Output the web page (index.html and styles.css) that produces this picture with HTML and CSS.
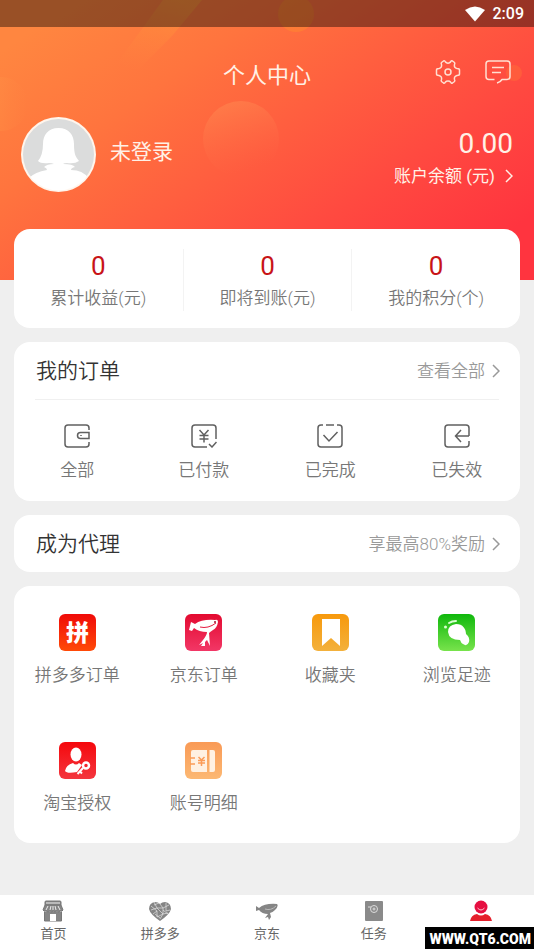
FILE: index.html
```html
<!DOCTYPE html>
<html lang="zh-CN">
<head>
<meta charset="utf-8">
<meta name="viewport" content="width=device-width, initial-scale=1">
<title>个人中心</title>
<link rel="stylesheet" href="styles.css">
</head>
<body>
<header class="hero">
  <svg class="hero-art" viewBox="0 0 534 280" preserveAspectRatio="xMidYMid slice" aria-hidden="true">
    <defs>
      <linearGradient id="ball" x1="0" y1="0" x2="0.3" y2="1"><stop offset="0" stop-color="#ff8a50" stop-opacity=".65"/><stop offset="1" stop-color="#ff6a48" stop-opacity="0"/></linearGradient>
      <linearGradient id="beam" x1="0.7" y1="0" x2="0.2" y2="1"><stop offset="0" stop-color="#ffa038" stop-opacity=".5"/><stop offset="1" stop-color="#ff8a40" stop-opacity="0"/></linearGradient>
      <linearGradient id="side" x1="0" y1="0" x2="1" y2="0"><stop offset="0" stop-color="#ff9a48" stop-opacity=".6"/><stop offset="1" stop-color="#ff8a44" stop-opacity="0"/></linearGradient>
    </defs>
    <path d="M163 0H202L172 36L138 70L112 70Z" fill="url(#beam)"/>
    <circle cx="241" cy="139" r="38" fill="url(#ball)"/>
    <circle cx="296" cy="14" r="18" fill="#ffa820" opacity=".25"/>
    <circle cx="1" cy="104" r="27" fill="url(#side)"/>
    <circle cx="514" cy="73" r="8" fill="#ff7038" opacity=".45"/>
  </svg>
  <div class="status">
    <svg width="20" height="16" viewBox="0 0 20 16" aria-hidden="true"><path d="M0 4Q10-3 20 4L10 15.500Z" fill="#fff"/></svg>
    <span>2:09</span>
  </div>
  <div class="title-row">
    <h1>个人中心</h1>
    <div class="tools">
      <button type="button" aria-label="设置">
        <svg width="26" height="26" viewBox="0 0 26 26"><path d="M8.500 2C9.500 1.500 10 2 10.500 3C11.500 4.500 14.500 4.500 15.500 3C16 2 16.500 1.500 17.500 2L19.500 3.500C20 4 20 4.500 19.500 5.500C19 7.500 20 9 22 9.500C24 9.500 24.500 10 24.500 11V15C24.500 16 24 16.500 22 16.500C20 17 19 18.500 19.500 20.500C20 21.500 20 22 19.500 22.500L17.500 24C16.500 24.500 16 24 15.500 23C14.500 21.500 11.500 21.500 10.500 23C10 24 9.500 24.500 8.500 24L6.500 22.500C6 22 6 21.500 6.500 20.500C7 18.500 6 17 4 16.500C2 16.500 1.500 16 1.500 15V11C1.500 10 2 9.500 4 9.500C6 9 7 7.500 6.500 5.500C6 4.500 6 4 6.500 3.500Z"/><circle cx="13" cy="13" r="3"/></svg>
      </button>
      <button type="button" aria-label="消息">
        <svg width="26" height="26" viewBox="0 0 26 26"><path d="M9.500 20.500H4Q1 20.500 1 17.500V5Q1 2 4 2H22Q25 2 25 5V17.500Q25 20.500 22 20.500H17Q15.500 23 12 24M7 8.500H19M7 13.500H16"/></svg>
      </button>
    </div>
  </div>
  <div class="profile">
    <svg class="avatar" viewBox="0 0 75 75" aria-hidden="true">
      <defs><clipPath id="face"><circle cx="37.500" cy="37.500" r="36"/></clipPath></defs>
      <circle cx="37.500" cy="37.500" r="37.500" fill="#fff5ec"/>
      <circle cx="37.500" cy="37.500" r="35.500" fill="#dbdcdc"/>
      <path clip-path="url(#face)" d="M37.500 11C48 11 53 18 53 27C53 38 55 40 58 44Q54 47 46 46Q43 46 42 47Q52 47 54 50Q50 51 50 53Q62 53 67 61L60 78H15L8 61Q14 55 26 53Q26 51 23 50Q26 47 33 47Q31 46 28 46Q20 47 17 44Q22 38 22 27C22 18 27 11 37.500 11Z" fill="#fff"/>
    </svg>
    <span class="name">未登录</span>
    <a class="balance" href="#balance">
      <strong>0.00</strong>
      <span>账户余额 (元)<svg class="chev" width="8" height="14" viewBox="0 0 8 14"><path d="M1 1L7 7L1 13"/></svg></span>
    </a>
  </div>
</header>

<main>
  <section class="card stats">
    <div><b>0</b><span>累计收益(元)</span></div>
    <div><b>0</b><span>即将到账(元)</span></div>
    <div><b>0</b><span>我的积分(个)</span></div>
  </section>

  <section class="card">
    <div class="head">
      <h2>我的订单</h2>
      <a href="#orders">查看全部<svg class="chev" width="8" height="14" viewBox="0 0 8 14"><path d="M1 1L7 7L1 13"/></svg></a>
    </div>
    <nav class="grid orders">
      <a href="#all"><svg width="26" height="24" viewBox="0 0 26 24"><path d="M25 6V4Q25 1 22 1H4Q1 1 1 4V20Q1 23 4 23H22Q25 23 25 20V18M25 8.500H16.500Q13.500 8.500 13.500 11.500Q13.500 14.500 16.500 14.500H25ZM17 11V12"/></svg>全部</a>
      <a href="#paid"><svg width="26" height="24" viewBox="0 0 26 24"><path d="M25 15V4Q25 1 22 1H4Q1 1 1 4V20Q1 23 4 23H16M18 20L21 23L25.500 18M8.500 6L13 11L17.500 6M8.500 11.500H17.500M8.500 15H17.500M13 11V18.500"/></svg>已付款</a>
      <a href="#done"><svg width="26" height="24" viewBox="0 0 26 24"><path d="M6 1H4Q1 1 1 4V20Q1 23 4 23H22Q25 23 25 20V4Q25 1 22 1H20M9 1H17M6.500 11L12 17L20.500 8"/></svg>已完成</a>
      <a href="#invalid"><svg width="26" height="24" viewBox="0 0 26 24"><path d="M25 12V4Q25 1 22 1H4Q1 1 1 4V20Q1 23 4 23H22Q25 23 25 20V17M25 12H11.500M17 6L11.500 12L17 18"/></svg>已失效</a>
    </nav>
  </section>

  <section class="card">
    <div class="head">
      <h2>成为代理</h2>
      <a href="#agent">享最高80%奖励<svg class="chev" width="8" height="14" viewBox="0 0 8 14"><path d="M1 1L7 7L1 13"/></svg></a>
    </div>
  </section>

  <nav class="card grid services">
    <a href="#pdd"><svg width="37" height="37" viewBox="0 0 37 37">
      <defs><linearGradient id="g1" x2="0" y2="1"><stop stop-color="#f00a08"/><stop offset="1" stop-color="#ff4a08"/></linearGradient></defs>
      <rect width="37" height="37" rx="6" fill="url(#g1)"/><text class="glyph" x="18.500" y="27" text-anchor="middle">拼</text></svg>拼多多订单</a>
    <a href="#jd"><svg width="37" height="37" viewBox="0 0 37 37">
      <defs><linearGradient id="g2" x2="0" y2="1"><stop stop-color="#e30a30"/><stop offset="1" stop-color="#f23766"/></linearGradient></defs>
      <rect width="37" height="37" rx="6" fill="url(#g2)"/><path d="M6 8L10 10Q17 5 30 6Q33 5 33 8Q32 14 28 16Q25 18 24 19L25 32L22 26L20 28L20 32L16 32L18 29L14 31L18 26Q22 21 22 18Q14 18 9 14L7 17L4 16Z" fill="#fff"/><path d="M15 13Q23 15 31 9" fill="none" stroke="#e51a40"/><circle cx="30" cy="8" r="1" fill="#a01030"/></svg>京东订单</a>
    <a href="#fav"><svg width="37" height="37" viewBox="0 0 37 37">
      <defs><linearGradient id="g3" x2="0" y2="1"><stop stop-color="#f7990c"/><stop offset="1" stop-color="#f3b13c"/></linearGradient></defs>
      <rect width="37" height="37" rx="6" fill="url(#g3)"/><path d="M10 5H28V32L19 24L10 32Z" fill="#fff"/></svg>收藏夹</a>
    <a href="#history"><svg width="37" height="37" viewBox="0 0 37 37">
      <defs><linearGradient id="g4" x2="0" y2="1"><stop stop-color="#0fb80c"/><stop offset="1" stop-color="#78e34c"/></linearGradient></defs>
      <rect width="37" height="37" rx="6" fill="url(#g4)"/><path d="M18 10C25 10 28 15 28 20Q32 23 31 28Q29 33 25 30Q23 29 22 26Q11 26 10 18Q10 11 18 10Z" fill="#fff"/><path d="M11 9Q14 7 18 7" fill="none" stroke="#d9ffd0" stroke-width="2" stroke-linecap="round"/><circle cx="7.500" cy="13" r="1.500" fill="#d9ffd0"/></svg>浏览足迹</a>
    <a href="#taobao"><svg width="37" height="37" viewBox="0 0 37 37">
      <defs><linearGradient id="g5" x2="0" y2="1"><stop stop-color="#f5080c"/><stop offset="1" stop-color="#f4363e"/></linearGradient></defs>
      <rect width="37" height="37" rx="6" fill="url(#g5)"/><ellipse cx="17" cy="12.500" rx="5.500" ry="7" fill="#fff"/><path d="M6 29Q7 23 14 21Q17 24 20 21L23 23L18 30Q8 32 6 29Z" fill="#fff"/><circle cx="27" cy="23.500" r="3" fill="none" stroke="#fff" stroke-width="2.500"/><path d="M24 26L18.500 32M21 29.500L23 31.500" stroke="#fff" stroke-width="2"/></svg>淘宝授权</a>
    <a href="#details"><svg width="37" height="37" viewBox="0 0 37 37">
      <defs><linearGradient id="g6" x2="0" y2="1"><stop stop-color="#f99a56"/><stop offset="1" stop-color="#fcb873"/></linearGradient></defs>
      <rect width="37" height="37" rx="6" fill="url(#g6)"/><path d="M8 8H22V30H8Q6 30 6 28V10Q6 8 8 8ZM24.500 8H28Q30 8 30 10V28Q30 30 28 30H24.500Z" fill="#fff1e2"/><path d="M5 16H10M5 22H10M13.500 15L16.500 18L19.500 15M13 18.500H20M13 21H20M16.500 18V24" fill="none" stroke="#fb9c58" stroke-width="1.500"/></svg>账号明细</a>
  </nav>
</main>

<nav class="tabs">
  <a href="#home"><svg width="22" height="22" viewBox="0 0 22 22"><path d="M3 2Q3 1 4 1H18Q19 1 19 2V5H3ZM3 5L1 10Q2 12 4 11Q6 13 8 11Q10 13 11 11Q13 13 15 11Q17 13 18 11Q20 12 21 10L19 5M2.500 12V21H19.500V12" fill="#858585" stroke="#777"/><path d="M4 3H18M6 6L4 10M9 6L8 10M13 6L14 10M16 6L18 10M11 6V10" stroke="#eee" fill="none"/><path d="M8 14H14V21H8Z" fill="#fff"/></svg>首页</a>
  <a href="#group"><svg width="22" height="22" viewBox="0 0 22 22"><path d="M11 21Q1 14 0 9Q0 3 6 2Q9 2 11 4Q13 2 16 2Q22 3 22 9Q21 14 11 21Z" fill="#858585"/><path d="M2 6L8 11L4 14M5 2L8 8L2 10M8 8L14 14L11 19M11 4L14 8L20 5M14 8L14 14L19 13M17 3V11L21 10M8 11V17L14 14M8 8H14M5 5L10 3M14 10L19 14M6 14L11 18" stroke="#e2e2e2" stroke-width=".7" fill="none"/></svg>拼多多</a>
  <a href="#jingdong"><svg width="22" height="22" viewBox="0 0 22 22"><path d="M0 6L3 8Q9 3 21 4Q23 6 19 10Q16 13 14 13L15 17L13 20L12 17L9 18L12 14Q6 14 3 10L0 11Z" fill="#858585"/><path d="M9 9Q15 11 20 6" stroke="#bbb" fill="none"/></svg>京东</a>
  <a href="#tasks"><svg width="22" height="22" viewBox="0 0 22 22"><rect x="2" y="1" width="18" height="20" rx="1" fill="#8a8a8a"/><circle cx="11" cy="9" r="3.500" fill="none" stroke="#ddd"/><path d="M5 7H8M9.500 9H12.500M11 7.500V10.500" stroke="#ddd"/></svg>任务</a>
  <a href="#me" aria-label="个人中心" aria-current="page"><svg width="22" height="22" viewBox="0 0 22 22"><circle cx="11" cy="7" r="6.500" fill="#e60f41"/><path d="M7.500 8Q11 12 14.500 8" fill="none" stroke="#ffc4cf"/><path d="M0 21Q1 15 7 14Q11 17 15 14Q21 15 22 21Z" fill="#e5202c"/></svg></a>
</nav>
<div class="mark">WWW.QT6.COM</div>
</body>
</html>
```
FILE: styles.css
```css
* { box-sizing: border-box; }
body {
  margin: 0;
  min-height: 100vh;
  display: flex;
  flex-direction: column;
  background: #efefef;
  color: #777;
  font-family: Roboto, "Noto Sans CJK SC", sans-serif;
  font-size: 17px;
  font-weight: 350;
  line-height: 24px;
}
a { color: inherit; text-decoration: none; }
h1, h2 { margin: 0; font-weight: 350; }
svg { display: block; flex: none; }

.hero {
  position: relative;
  height: 280px;
  color: #fff1e6;
  background: linear-gradient(145deg, #ff8640 8%, #ff743e 30%, #ff4a40 68%, #ff343f 90%);
}
.hero > * { position: relative; }
.hero .hero-art { position: absolute; inset: 0; width: 100%; height: 100%; }
.status {
  display: flex;
  align-items: center;
  justify-content: flex-end;
  gap: 8px;
  height: 27px;
  padding: 0 10px;
  background: rgba(0, 0, 0, .4);
  color: #fff;
  font-size: 16px;
  font-weight: 500;
}
.title-row {
  display: grid;
  grid-template-columns: 1fr auto 1fr;
  align-items: center;
  height: 90px;
  padding: 0 23px;
}
h1 { grid-column: 2; padding-top: 7px; font-size: 22px; line-height: 32px; font-weight: 400; }
.tools { display: flex; justify-content: flex-end; gap: 24px; }
.tools button { padding: 0; border: 0; background: none; cursor: pointer; }
.tools svg { fill: none; stroke: #ffe0d2; stroke-width: 1.5; stroke-linejoin: round; }
.profile { display: flex; align-items: center; gap: 14px; padding: 0 21px; }
.avatar { width: 75px; height: 75px; }
.name { padding-bottom: 5px; font-size: 21px; font-weight: 400; }
.balance { margin-left: auto; padding-top: 7px; text-align: right; font-weight: 400; }
.balance strong { display: block; font-size: 28px; line-height: 36px; font-weight: 400; }
.balance span { display: flex; align-items: center; gap: 10px; line-height: 28px; }
.chev { fill: none; stroke: currentColor; stroke-width: 1.5; }

main { flex: 1; display: grid; align-content: start; gap: 14px; padding: 0 14px 52px; margin-top: -51px; position: relative; }
.card { background: #fff; border-radius: 16px; }
.stats { display: grid; grid-template-columns: repeat(3, 1fr); padding: 20px 0 17px; text-align: center; }
.stats div { display: grid; gap: 2px; }
.stats div + div { border-left: 1px solid #f3f3f3; }
.stats b { color: #c81418; font-size: 26px; line-height: 34px; font-weight: 400; }
.stats span { line-height: 26px; }
.head {
  display: flex;
  align-items: center;
  justify-content: space-between;
  height: 57px;
  margin: 0 20px 0 22px;
  color: #999;
}
.head h2 { color: #333; font-size: 21px; line-height: 30px; }
.head a { display: flex; align-items: center; gap: 7px; }
.grid { display: grid; grid-template-columns: repeat(4, 1fr); }
.grid a { display: flex; flex-direction: column; align-items: center; }
.orders { position: relative; padding: 25px 0 19px; }
.orders::before { content: ""; position: absolute; top: 0; left: 21px; right: 21px; border-top: 1px solid #f0f0f0; }
.orders a { gap: 10px; }
.orders svg { fill: none; stroke: #606060; stroke-width: 1.5; }
.services { row-gap: 55px; padding: 28px 0; }
.services a { gap: 12px; }
.glyph { fill: #fff; font: 900 23px "Noto Sans CJK SC", sans-serif; }

.tabs {
  position: sticky;
  bottom: 0;
  display: grid;
  grid-template-columns: repeat(5, 1fr);
  height: 54px;
  padding-top: 5px;
  background: #fff;
  color: #666;
  font-size: 13px;
  font-weight: 400;
  line-height: 20px;
}
.tabs a { display: flex; flex-direction: column; align-items: center; gap: 2px; }
.mark {
  position: fixed;
  right: 0;
  bottom: 0;
  padding: 2px 3px 0 4px;
  background: #000;
  color: #fff;
  font-size: 14px;
  font-weight: 900;
  line-height: 20px;
}
```
